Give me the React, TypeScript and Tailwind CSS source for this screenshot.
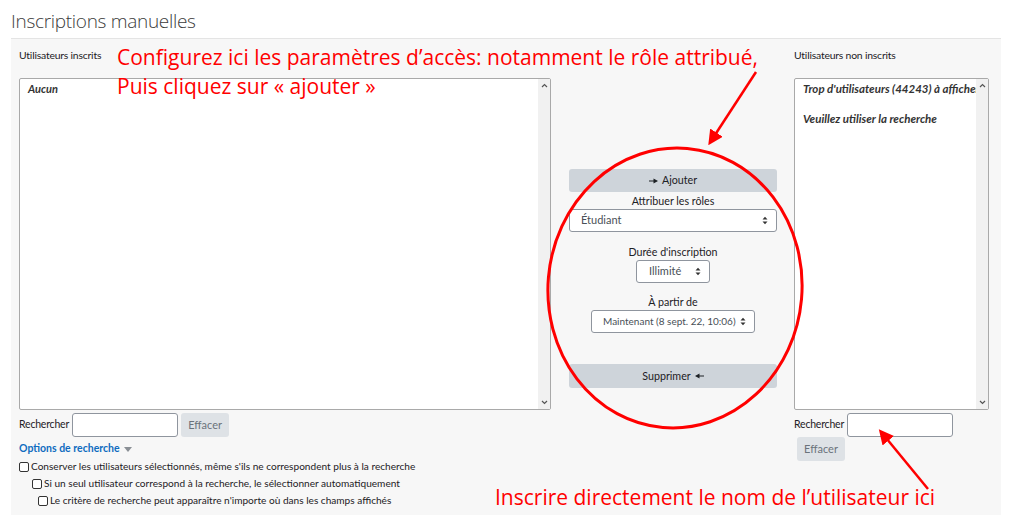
import React from "react";

const ui = "font-['Lato','Noto_Sans',sans-serif]";

const ScrollTrack = () => (
  <div className="flex w-[12px] shrink-0 flex-col items-center justify-between bg-[#f1f1f1] py-[4px]">
    <svg width="7" height="5" viewBox="0 0 7 5">
      <path d="M1 4 L3.5 1.5 L6 4" fill="none" stroke="#555" strokeWidth="1.2" />
    </svg>
    <svg width="7" height="5" viewBox="0 0 7 5">
      <path d="M1 1 L3.5 3.5 L6 1" fill="none" stroke="#555" strokeWidth="1.2" />
    </svg>
  </div>
);

const Caret = () => (
  <svg width="6" height="9" viewBox="0 0 6 9" className="shrink-0">
    <path d="M0.5 3.6 L3 0.8 L5.5 3.6 Z M0.5 5.4 L3 8.2 L5.5 5.4 Z" fill="#333" />
  </svg>
);

const Select = ({ label, className }: { label: string; className: string }) => (
  <div
    className={`flex h-[23px] items-center justify-between rounded-[3px] border border-[#8f959e] bg-white pr-[8px] text-[#495057] ${className}`}
  >
    <span className="whitespace-nowrap">{label}</span>
    <Caret />
  </div>
);

const Checkbox = ({ text, indent }: { text: string; indent: string }) => (
  <div className={`flex h-[17px] items-center gap-[2px] ${indent}`}>
    <span className="h-[10px] w-[10px] shrink-0 rounded-[2px] border border-[#333] bg-white" />
    <span className="whitespace-nowrap text-[10.1px] text-[#1d2125]">{text}</span>
  </div>
);

const Search = () => (
  <>
    <span className="mr-[3px] text-[10.5px] tracking-[-0.2px] text-[#1d2125]">Rechercher</span>
    <div className="h-[24px] w-[106px] rounded-[3px] border border-[#8f959e] bg-white" />
  </>
);

const Clear = () => (
  <div className="ml-[3px] flex h-[24px] w-[48px] items-center justify-center rounded-[3px] bg-[#dee2e6] text-[11px] text-[#6a737b]">
    Effacer
  </div>
);

export default function App() {
  return (
    <div className={`relative h-[525px] w-[1012px] overflow-hidden bg-white ${ui}`}>
      <div className="h-[38px] pl-[11px] pt-[8px] font-['Open_Sans',sans-serif] text-[19px] font-light leading-[26px] tracking-[-0.3px] text-[#3b3b3b]">
        Inscriptions manuelles
      </div>

      <div className="mx-[11px] flex h-[477px] border-t border-[#e4e4e4] bg-[#f7f7f7] px-[8px] pt-[9px]">
        {/* enrolled users */}
        <div className="flex w-[532px] flex-col">
          <div className="h-[14px] text-[10.4px] leading-[14px] tracking-[-0.2px] text-[#1d2125]">Utilisateurs inscrits</div>
          <div className="mt-[16px] flex h-[332px] rounded-[2px] border border-[#a9a9a9] bg-white">
            <div className="flex-1 px-[8px] pt-[2px] text-[11px] font-bold italic text-[#333]">Aucun</div>
            <ScrollTrack />
          </div>
          <div className="mt-[3px] flex items-center">
            <Search />
            <Clear />
          </div>
          <div className="mt-[5px] flex h-[14px] items-center gap-[4px] text-[10.5px] font-bold text-[#0f6cbf]">
            Options de recherche
            <svg width="8" height="5" viewBox="0 0 8 5">
              <path d="M0 0 L8 0 L4 5 Z" fill="#8a8f95" />
            </svg>
          </div>
          <div className="mt-[2px] flex flex-col">
            <Checkbox indent="" text="Conserver les utilisateurs sélectionnés, même s'ils ne correspondent plus à la recherche" />
            <Checkbox indent="pl-[13px]" text="Si un seul utilisateur correspond à la recherche, le sélectionner automatiquement" />
            <Checkbox indent="pl-[19px]" text="Le critère de recherche peut apparaître n'importe où dans les champs affichés" />
          </div>
        </div>

        {/* controls */}
        <div className="ml-[18px] flex w-[208px] flex-col items-center pt-[121px] text-[10.7px] text-[#1d2125]">
          <div className="flex h-[23px] w-full items-center justify-center gap-[4px] rounded-[3px] bg-[#ced4da]">
            <svg width="9" height="6" viewBox="0 0 9 6">
              <path d="M0 2.6 L4.5 2.6 L4.5 0.6 L9 3 L4.5 5.4 L4.5 3.4 L0 3.4 Z" fill="#1d2125" />
            </svg>
            Ajouter
          </div>
          <div className="h-[17px] leading-[17px]">Attribuer les rôles</div>
          <Select label="Étudiant" className="w-full pl-[11px] text-[11px]" />
          <div className="mt-[12px] h-[16px] leading-[16px]">Durée d'inscription</div>
          <Select label="Illimité" className="w-[74px] pl-[12px] text-[11px]" />
          <div className="mt-[11px] h-[16px] leading-[16px]">À partir de</div>
          <Select label="Maintenant (8 sept. 22, 10:06)" className="w-[164px] pl-[11px] text-[10px]" />
          <div className="mt-[31px] flex h-[24px] w-full items-center justify-center gap-[4px] rounded-[3px] bg-[#ced4da]">
            Supprimer
            <svg width="9" height="6" viewBox="0 0 9 6">
              <path d="M9 2.6 L4.5 2.6 L4.5 0.6 L0 3 L4.5 5.4 L4.5 3.4 L9 3.4 Z" fill="#1d2125" />
            </svg>
          </div>
        </div>

        {/* potential users */}
        <div className="ml-[17px] flex w-[195px] flex-col">
          <div className="h-[14px] text-[10.4px] leading-[14px] tracking-[-0.2px] text-[#1d2125]">Utilisateurs non inscrits</div>
          <div className="mt-[16px] flex h-[332px] rounded-[2px] border border-[#a9a9a9] bg-white">
            <div className="min-w-0 flex-1 overflow-hidden pl-[8px] pt-[2px] text-[11.5px] font-bold italic leading-[16px] text-[#333]">
              <div className="whitespace-nowrap">Trop d'utilisateurs (44243) à afficher</div>
              <div className="mt-[14px] whitespace-nowrap">Veuillez utiliser la recherche</div>
            </div>
            <ScrollTrack />
          </div>
          <div className="mt-[3px] flex items-center">
            <Search />
          </div>
          <div className="flex">
            <Clear />
          </div>
        </div>
      </div>

      {/* annotations */}
      <div className="absolute left-[117px] top-[43px] font-['Open_Sans',sans-serif] text-[21px] leading-[29px] text-[#ff0000]">
        <div>Configurez ici les paramètres d’accès: notamment le rôle attribué,</div>
        <div>Puis cliquez sur « ajouter »</div>
      </div>
      <div className="absolute left-[495px] top-[483px] font-['Open_Sans',sans-serif] text-[21px] leading-[29px] text-[#ff0000]">
        Inscrire directement le nom de l’utilisateur ici
      </div>
      <svg className="pointer-events-none absolute left-0 top-0" width="1012" height="525" viewBox="0 0 1012 525">
        <defs>
          <marker id="head" markerWidth="6" markerHeight="6" refX="4" refY="3" orient="auto" markerUnits="strokeWidth">
            <path d="M0 0 L6 3 L0 6 Z" fill="#ff0000" />
          </marker>
        </defs>
        <ellipse cx="675" cy="288" rx="127" ry="140" transform="rotate(5 675 288)" fill="none" stroke="#ff0000" strokeWidth="3" />
        <line x1="756" y1="72" x2="711" y2="141" stroke="#ff0000" strokeWidth="2.5" markerEnd="url(#head)" />
        <line x1="928" y1="489" x2="882" y2="433" stroke="#ff0000" strokeWidth="2.5" markerEnd="url(#head)" />
      </svg>
    </div>
  );
}
